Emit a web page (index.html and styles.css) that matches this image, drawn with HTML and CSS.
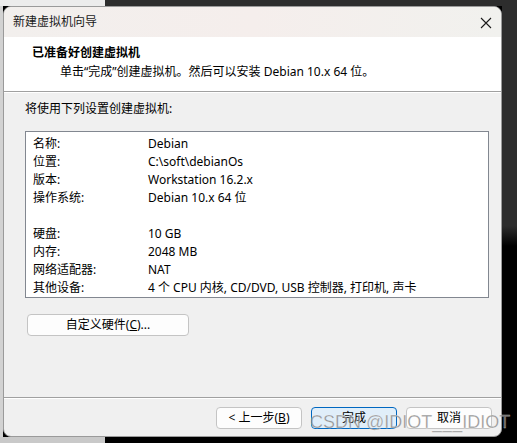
FILE: index.html
```html
<html>
<head>
	<title>新建虚拟机向导</title>
	<link rel="stylesheet" href="styles.css">
</head>
<body>
	<div class="topStrip">
		<div class="topLight"></div>
		<div class="topDark"></div>
	</div>
	<div class="midRow">
		<div class="leftGutter"></div>
		<div class="dialog">
			<div class="titleBar">
				<span class="titleText">新建虚拟机向导</span>
				<svg class="closeIcon" width="12" height="12" viewBox="0 0 12 12">
					<path d="M1 1 L11 11 M11 1 L1 11" stroke="#1a1a1a" stroke-width="1.1" fill="none"/>
				</svg>
			</div>
			<div class="header">
				<div class="headTitle">已准备好创建虚拟机</div>
				<div class="headSub">单击“完成”创建虚拟机。然后可以安装 Debian 10.x 64 位。</div>
			</div>
			<div class="content">
				<div class="intro">将使用下列设置创建虚拟机:</div>
				<div class="summary">
					<div class="row"><span class="key">名称:</span><span>Debian</span></div>
					<div class="row"><span class="key">位置:</span><span>C:\soft\debianOs</span></div>
					<div class="row"><span class="key">版本:</span><span>Workstation 16.2.x</span></div>
					<div class="row"><span class="key">操作系统:</span><span>Debian 10.x 64 位</span></div>
					<div class="row"></div>
					<div class="row"><span class="key">硬盘:</span><span>10 GB</span></div>
					<div class="row"><span class="key">内存:</span><span>2048 MB</span></div>
					<div class="row"><span class="key">网络适配器:</span><span>NAT</span></div>
					<div class="row"><span class="key">其他设备:</span><span>4 个 CPU 内核, CD/DVD, USB 控制器, 打印机, 声卡</span></div>
				</div>
				<button class="btn hwBtn">自定义硬件(<u>C</u>)...</button>
			</div>
			<div class="footer">
				<button class="btn">&lt; 上一步(<u>B</u>)</button>
				<button class="btn primary">完成</button>
				<button class="btn">取消</button>
			</div>
		</div>
		<div class="rightGutter"></div>
	</div>
	<div class="bottomStrip">
		<div class="bottomLight"></div>
		<div class="bottomDark"></div>
	</div>
	<div class="watermark">CSDN @IDIOT___IDIOT</div>
</body>
</html>
```
FILE: styles.css
```css
body {
	margin: 0;
	width: 517px;
	height: 443px;
	overflow: hidden;
	background-color: #000000;
	font-family: 'Noto Sans', 'Noto Sans CJK SC', sans-serif;
	font-size: 12px;
	color: #000000;
	display: flex;
	flex-direction: column;
	position: relative;
}
.topStrip {
	display: flex;
	height: 6px;
}
.topLight {
	width: 105px;
	background-color: #ececec;
}
.topDark {
	flex: 1;
	background-color: #2d2d2d;
}
.midRow {
	display: flex;
	height: 431px;
}
.leftGutter {
	width: 3px;
	background-color: #d2d2d2;
}
.rightGutter {
	flex: 1;
	background: linear-gradient(#2d2d2d 0, #2d2d2d 220px, #000000 240px);
}
.bottomStrip {
	display: flex;
	flex: 1;
}
.bottomLight {
	width: 105px;
	background-color: #c9c9c9;
}
.bottomDark {
	flex: 1;
	background-color: #000000;
}
.dialog {
	width: 497px;
	border: 1px solid #9a9a9a;
	border-radius: 8px;
	background-color: #f0f0f0;
	display: flex;
	flex-direction: column;
	overflow: hidden;
}
.titleBar {
	height: 30px;
	background: linear-gradient(90deg, #f2efed, #f5eeec 50%, #f1f1ee);
	display: flex;
	align-items: center;
	justify-content: space-between;
	padding: 0 9px 0 9px;
}
.titleText {
	color: #1a1a1a;
	line-height: 16px;
}
.closeIcon {
	margin-top: 1px;
}
.header {
	background-color: #ffffff;
	border-bottom: 1px solid #a0a0a0;
	padding: 6px 0 0 28px;
	box-sizing: border-box;
	height: 55px;
}
.headTitle {
	font-weight: bold;
	line-height: 20px;
}
.headSub {
	padding-left: 28px;
	line-height: 18px;
}
.content {
	border-top: 1px solid #ffffff;
	padding: 7px 0 0 21px;
	flex: 1;
}
.intro {
	line-height: 18px;
}
.summary {
	margin-top: 13px;
	border: 1px solid #828790;
	background-color: #ffffff;
	padding: 3px 0 0 7px;
	width: 455px;
	height: 162px;
}
.row {
	display: flex;
	height: 18px;
	line-height: 18px;
	white-space: nowrap;
}
.key {
	width: 115px;
}
.btn {
	font-family: 'Noto Sans', 'Noto Sans CJK SC', sans-serif;
	font-size: 12px;
	color: #000000;
	background-color: #fdfdfd;
	border: 1px solid #c4c4c4;
	border-radius: 4px;
	height: 22px;
	width: 86px;
	padding: 0;
	line-height: 18px;
}
.btn u {
	text-decoration-thickness: 1px;
}
.hwBtn {
	width: 162px;
	margin: 16px 0 0 2px;
}
.footer {
	border-top: 1px solid #a0a0a0;
	box-shadow: inset 0 1px 0 #ffffff;
	display: flex;
	justify-content: flex-end;
	gap: 9px;
	padding: 9px 9px 0 0;
	box-sizing: border-box;
	height: 39px;
}
.primary {
	background-color: #e0eef9;
	border-color: #0067c0;
}
.watermark {
	position: absolute;
	left: 310px;
	top: 412px;
	font-family: 'Liberation Sans', sans-serif;
	font-size: 18px;
	color: rgba(120, 120, 120, 0.75);
	-webkit-text-stroke: 0.4px rgba(255, 255, 255, 0.6);
	white-space: nowrap;
}
```
